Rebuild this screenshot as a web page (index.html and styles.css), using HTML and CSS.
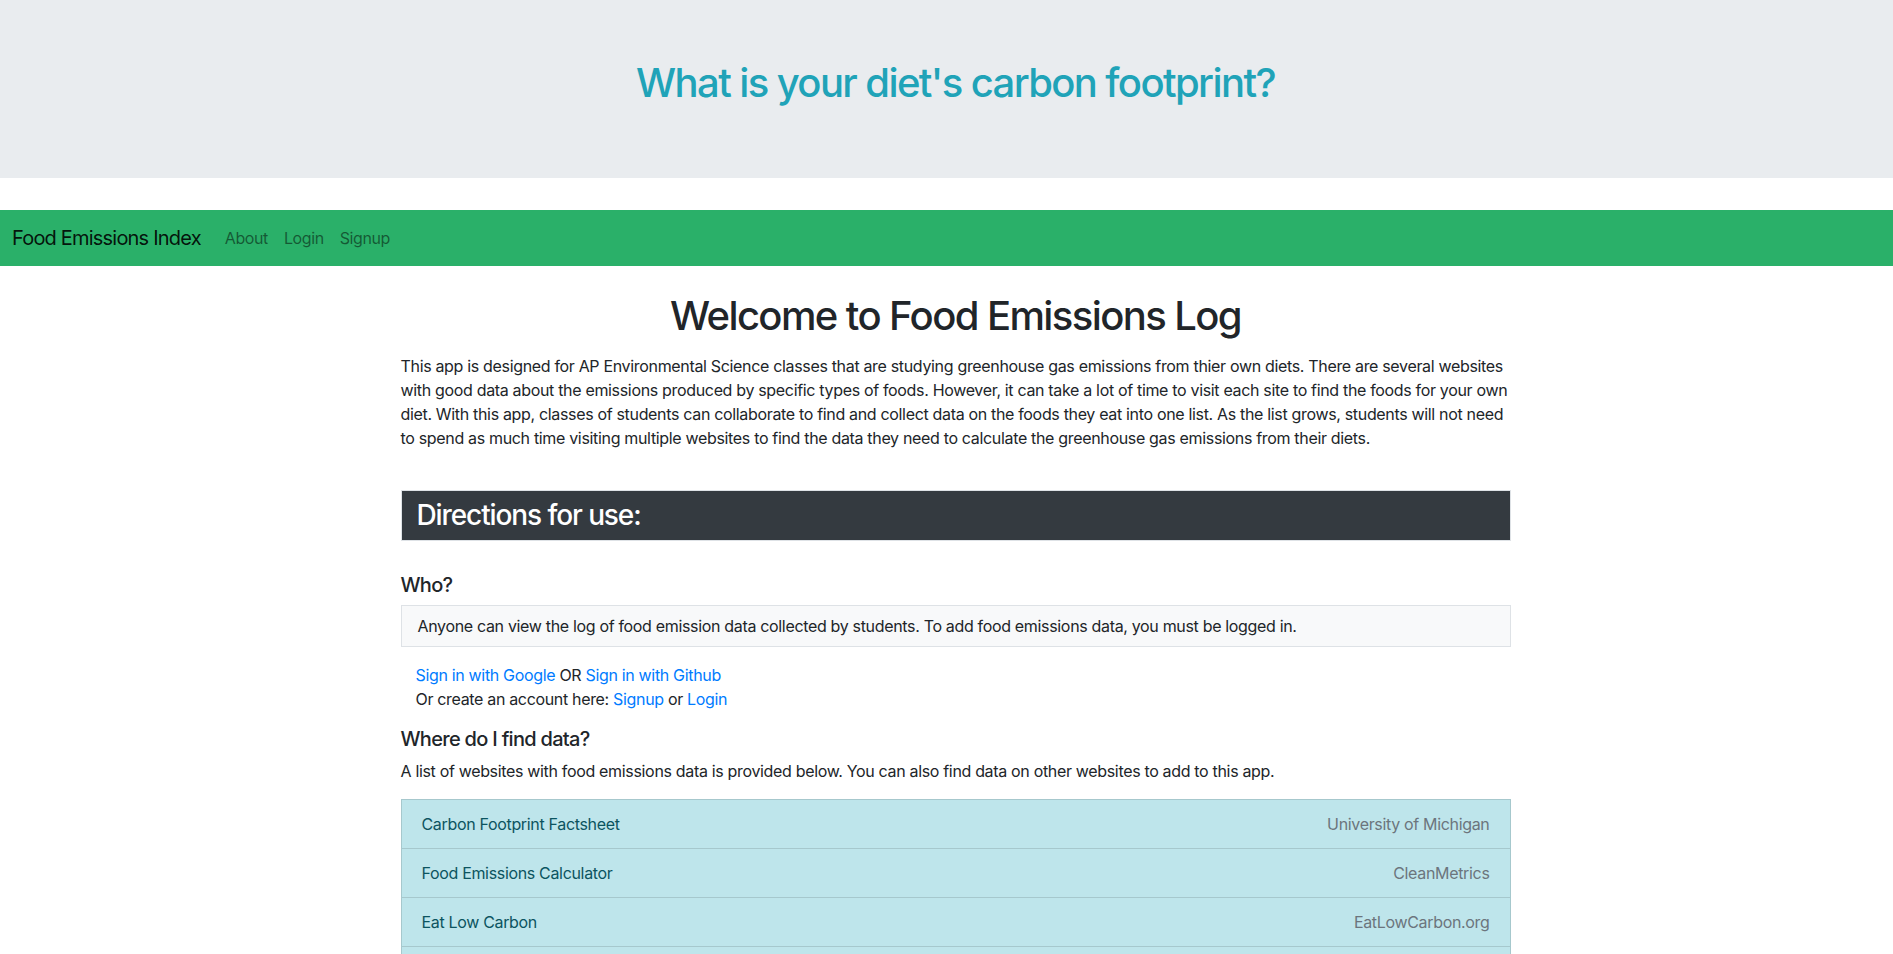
FILE: index.html
```html
<!DOCTYPE html>
<html lang="en">
<head>
<meta charset="utf-8">
<title>Food Emissions Index</title>
<link rel="stylesheet" href="styles.css">
</head>
<body>
<header class="jumbotron">
  <div class="shell">
    <h1 class="jumbo-title">What is your diet's carbon footprint?</h1>
  </div>
</header>

<nav class="navbar">
  <a class="brand" href="#">Food Emissions Index</a>
  <ul class="nav-links">
    <li><a href="#">About</a></li>
    <li><a href="#">Login</a></li>
    <li><a href="#">Signup</a></li>
  </ul>
</nav>

<main class="shell">
  <div class="container">
    <h1 class="welcome">Welcome to Food Emissions Log</h1>
    <p class="intro">This app is designed for AP Environmental Science classes that are studying greenhouse gas emissions from thier own diets. There are several websites with good data about the emissions produced by specific types of foods. However, it can take a lot of time to visit each site to find the foods for your own diet. With this app, classes of students can collaborate to find and collect data on the foods they eat into one list. As the list grows, students will not need to spend as much time visiting multiple websites to find the data they need to calculate the greenhouse gas emissions from their diets.</p>

    <h3 class="directions">Directions for use:</h3>

    <h5 class="sub">Who?</h5>
    <div class="note">Anyone can view the log of food emission data collected by students. To add food emissions data, you must be logged in.</div>
    <div class="signin">
      <div><a href="#">Sign in with Google</a> OR <a href="#">Sign in with Github</a></div>
      <div>Or create an account here: <a href="#">Signup</a> or <a href="#">Login</a></div>
    </div>

    <h5 class="sub">Where do I find data?</h5>
    <p class="lead-text">A list of websites with food emissions data is provided below. You can also find data on other websites to add to this app.</p>

    <ul class="sites">
      <li class="site"><span class="site-name">Carbon Footprint Factsheet</span><span class="site-src">University of Michigan</span></li>
      <li class="site"><span class="site-name">Food Emissions Calculator</span><span class="site-src">CleanMetrics</span></li>
      <li class="site"><span class="site-name">Eat Low Carbon</span><span class="site-src">EatLowCarbon.org</span></li>
      <li class="site"><span class="site-name">Food Carbon Emissions Calculator</span><span class="site-src">Food Emissions</span></li>
    </ul>
  </div>
</main>
</body>
</html>
```

FILE: styles.css
```css
* { box-sizing: border-box; }

html, body {
  margin: 0;
  padding: 0;
}

body {
  font-family: Inter, "Noto Sans", "Liberation Sans", sans-serif;
  font-size: 16px;
  line-height: 24px;
  letter-spacing: -0.33px;
  color: #212529;
  background: #fff;
}

a { color: #007bff; text-decoration: none; }

.shell {
  padding-left: 18px;
}

.jumbotron {
  background: #e9ecef;
  height: 178px;
  padding-top: 59px;
  margin-bottom: 32px;
}

.jumbo-title {
  margin: 0;
  text-align: center;
  font-size: 40px;
  line-height: 48px;
  font-weight: 500;
  color: #20a3b8;
  letter-spacing: -1.6px;
}

.navbar {
  display: flex;
  align-items: center;
  height: 56px;
  padding: 8px 16px 8px 12px;
  background: #2ab069;
}

.brand {
  font-size: 20px;
  line-height: 30px;
  letter-spacing: -0.8px;
  color: rgba(0, 0, 0, 0.9);
  margin-right: 16px;
  padding: 5px 0;
}

.nav-links {
  display: flex;
  list-style: none;
  margin: 0;
  padding: 0;
}

.nav-links a {
  display: block;
  padding: 8px;
  letter-spacing: -0.4px;
  color: rgba(0, 0, 0, 0.5);
}

.container {
  max-width: 1140px;
  margin: 0 auto;
  padding: 26px 15px 40px;
}

.welcome {
  margin: 0 0 14px;
  text-align: center;
  font-size: 40px;
  line-height: 48px;
  font-weight: 500;
  letter-spacing: -1.6px;
}

.intro {
  margin: 0 0 40px;
}

.directions {
  margin: 0 0 32px;
  height: 51px;
  padding: 8px 15px;
  font-size: 28px;
  line-height: 33px;
  font-weight: 500;
  color: #fff;
  background: #343a40;
  border: 1px solid #dee2e6;
  letter-spacing: -1.1px;
}

.sub {
  margin: 0 0 8px;
  font-size: 20px;
  line-height: 24px;
  font-weight: 500;
  letter-spacing: -0.7px;
}

.note {
  padding: 8px 16px;
  background: #f8f9fa;
  border: 1px solid #dee2e6;
}

.signin {
  margin: 16px 0 16px 15px;
}

.lead-text {
  margin: 0 0 16px;
}

.sites {
  list-style: none;
  margin: 0;
  padding: 0;
}

.site {
  display: flex;
  justify-content: space-between;
  padding: 12px 20px;
  background: #bee5eb;
  color: #0c5460;
  border: 1px solid rgba(0, 0, 0, 0.125);
  border-top-width: 0;
}

.site:first-child {
  border-top-width: 1px;
}

.site-src {
  color: #6c757d;
}
```
